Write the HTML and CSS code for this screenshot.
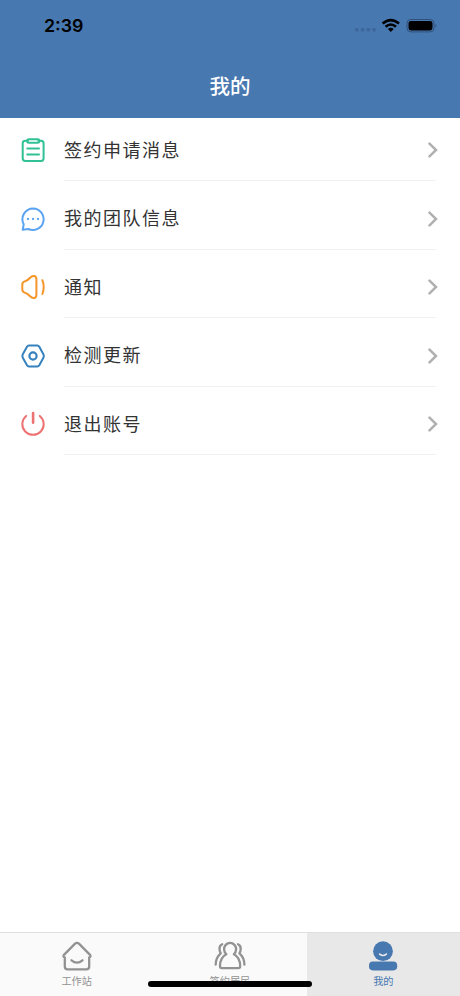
FILE: index.html
```html
<!DOCTYPE html>
<html lang="zh-CN">
<head>
<meta charset="utf-8">
<title>我的</title>
<link rel="stylesheet" href="styles.css">
</head>
<body>
<div class="app">
  <header class="header">
    <div class="status">
      <span class="time">2:39</span>
      <svg class="indicators" width="84" height="18" viewBox="0 0 84 18">
        <g fill="#3d679c"><rect x="1" y="11" width="3.6" height="3.6" rx="1"/><rect x="6.8" y="11" width="3.6" height="3.6" rx="1"/><rect x="12.6" y="11" width="3.6" height="3.6" rx="1"/><rect x="18.2" y="11" width="3.6" height="3.6" rx="1"/></g>
        <g fill="none" stroke="#000" stroke-width="2.6"><path d="M28.6 6.6Q36.8 -.4 45 6.6"/><path d="M31.6 9.8Q36.8 5.2 42 9.8"/></g>
        <path d="M33.9 11.9Q36.8 9.8 39.7 11.9L36.8 15Z"/>
        <rect x="53" y="2.5" width="27" height="12.4" rx="3.8" fill="none" stroke="#2e507b"/>
        <rect x="54.5" y="4" width="24" height="9.4" rx="2.4"/>
        <path d="M81.5 6.7Q83.5 8.5 81.5 10.5Z" fill="#2e507b"/>
      </svg>
    </div>
    <h1 class="title">我的</h1>
  </header>
  <main class="list">
    <a class="row">
      <svg class="icon" viewBox="0 0 26 26" stroke="#30c195"><path d="M8 3.7H5.3Q2.7 3.7 2.7 6.3V21.3Q2.7 23.9 5.3 23.9H21Q23.6 23.9 23.6 21.3V6.3Q23.6 3.7 21 3.7H18.3"/><rect x="7.2" y="2.3" width="12.2" height="3.5" rx="1.7"/><path d="M7.3 11.6H19M7.3 17.4H19"/></svg>
      <span class="label">签约申请消息</span>
      <svg class="chevron" viewBox="0 0 10 16"><path d="M1.5 1.7 8 8 1.5 14.3"/></svg>
    </a>
    <a class="row">
      <svg class="icon" viewBox="0 0 26 26" stroke="#5ba4f2"><path d="M13.2 2.4A10.8 10.8 0 1 1 8.3 23L2.7 23.8 3.7 18.2A10.8 10.8 0 0 1 13.2 2.4Z"/><path stroke-width="2.3" d="M8 13h.01M13 13h.01M18 13h.01"/></svg>
      <span class="label">我的团队信息</span>
      <svg class="chevron" viewBox="0 0 10 16"><path d="M1.5 1.7 8 8 1.5 14.3"/></svg>
    </a>
    <a class="row">
      <svg class="icon" viewBox="0 0 26 26" stroke="#f5962a"><path d="M4.6 7.4Q7.5 6.8 9.8 4 12.2 1.4 14.4 2 16.4 2.7 16.4 5.3V20.7Q16.4 23.3 14.4 24 12.2 24.6 9.8 22 7.5 19.4 4.6 18.6 2.3 17.8 2.3 15.6V10.4Q2.3 8.2 4.6 7.4ZM22.4 6.2Q25 13 22.4 20"/></svg>
      <span class="label">通知</span>
      <svg class="chevron" viewBox="0 0 10 16"><path d="M1.5 1.7 8 8 1.5 14.3"/></svg>
    </a>
    <a class="row">
      <svg class="icon" viewBox="0 0 26 26" stroke="#3682be"><path d="M9 2.5H17.3Q18.6 2.5 19.3 3.7L23.4 11.2Q24.4 13 23.4 14.8L19.3 22.3Q18.6 23.5 17.3 23.5H9Q7.7 23.5 7 22.3L2.8 14.8Q1.9 13 2.8 11.2L7 3.7Q7.7 2.5 9 2.5Z"/><circle cx="13" cy="13" r="3.6" stroke-width="2.2"/></svg>
      <span class="label">检测更新</span>
      <svg class="chevron" viewBox="0 0 10 16"><path d="M1.5 1.7 8 8 1.5 14.3"/></svg>
    </a>
    <a class="row">
      <svg class="icon" viewBox="0 0 26 26" stroke="#ed7373"><path d="M6.2 4.9A10.7 10.7 0 1 0 19.8 4.9"/><path stroke-width="2.6" d="M13.1 2V11.8"/></svg>
      <span class="label">退出账号</span>
      <svg class="chevron" viewBox="0 0 10 16"><path d="M1.5 1.7 8 8 1.5 14.3"/></svg>
    </a>
  </main>
  <nav class="tabs">
    <a class="tab">
      <svg class="tab-icon" viewBox="0 0 32 32"><path d="M3.2 14.6 13.8 3.9Q16 1.8 18.2 3.9L28.8 14.6Q30.6 16.8 28.2 17.3V26.5Q28.2 29.4 25.3 29.4H6.7Q3.8 29.4 3.8 26.5V17.3Q1.4 16.8 3.2 14.6Z"/><path d="M10.5 20.3Q16 24.9 21.5 20.3"/></svg>
      <span>工作站</span>
    </a>
    <a class="tab">
      <svg class="tab-icon" viewBox="0 0 32 32"><path d="M12.3 14.2A6 6.4 0 1 1 19.9 14.2C24 16.3 26.2 19.5 26.2 26.2Q26.2 28.1 24.3 28.1H7.9Q6 28.1 6 26.2C6 19.5 8.2 16.3 12.3 14.2Z"/><path d="M8.2 4.3Q5.2 5.5 5.5 9.3 5.6 11.6 6.8 13.3 1.8 17.3 1.7 24.7M24 4.3Q27 5.5 26.7 9.3 26.6 11.6 25.4 13.3 30.3 17.3 30.4 24.7"/></svg>
      <span>签约居民</span>
    </a>
    <a class="tab active">
      <svg class="tab-icon" viewBox="0 0 32 32"><g class="solid"><circle cx="16" cy="11.2" r="9.9"/><rect x="2" y="21.6" width="28.2" height="8.8" rx="3.8"/></g><path class="smile" d="M12.6 14.1Q16 16.8 19.4 14.1"/></svg>
      <span>我的</span>
    </a>
  </nav>
  <div class="home-indicator"></div>
</div>
</body>
</html>
```
FILE: styles.css
```css
* { box-sizing: border-box; }
body {
  margin: 0;
  background: #fff;
  font-family: "Noto Sans CJK SC", sans-serif;
}
.app {
  position: relative;
  display: flex;
  flex-direction: column;
  width: 460px;
  height: 996px;
  overflow: hidden;
}
.header {
  height: 118px;
  background: #4878b0;
}
.status {
  display: flex;
  align-items: center;
  justify-content: space-between;
  height: 52px;
  padding: 0 22px 0 44px;
}
.time {
  font: 600 17.8px/22px Inter, sans-serif;
  color: #000;
}
.title {
  margin: 0;
  height: 66px;
  font-size: 20.5px;
  font-weight: 500;
  line-height: 67px;
  text-align: center;
  color: #fff;
}
.list { flex: 1; }
.row {
  position: relative;
  display: flex;
  align-items: center;
  height: 68.5px;
  padding: 7px 22px 0 20px;
}
.row:first-child {
  height: 63px;
  padding-top: 1px;
}
.row::after {
  content: "";
  position: absolute;
  right: 24px;
  bottom: 0;
  left: 64px;
  height: 1px;
  background: #f0f0f0;
}
.icon {
  width: 26px;
  height: 26px;
  fill: none;
  stroke-width: 2;
  stroke-linecap: round;
  stroke-linejoin: round;
}
.label {
  flex: 1;
  margin: 0 0 2.6px 18px;
  font-size: 18px;
  line-height: 26px;
  letter-spacing: 1.5px;
  color: #333;
}
.chevron {
  width: 10px;
  height: 16px;
  fill: none;
  stroke: #b0b0b0;
  stroke-width: 2.5;
  stroke-linecap: round;
}
.tabs {
  display: flex;
  height: 64px;
  border-top: 1px solid #dedede;
  background: #fafafa;
}
.tab {
  display: flex;
  flex: 1;
  flex-direction: column;
  align-items: center;
  padding-top: 7px;
  font-size: 10.2px;
  line-height: 18px;
  color: #929292;
}
.tab-icon {
  width: 32px;
  height: 32px;
  fill: none;
  stroke: #929292;
  stroke-width: 2.3;
  stroke-linecap: round;
  stroke-linejoin: round;
}
.active {
  background: #e8e8e8;
  color: #4878b0;
}
.solid {
  fill: #4878b0;
  stroke: none;
}
.smile {
  stroke: #e8e8e8;
  stroke-width: 1.6;
}
.home-indicator {
  position: absolute;
  bottom: 9px;
  left: 148px;
  width: 164px;
  height: 6px;
  border-radius: 3px;
  background: #000;
}
```
